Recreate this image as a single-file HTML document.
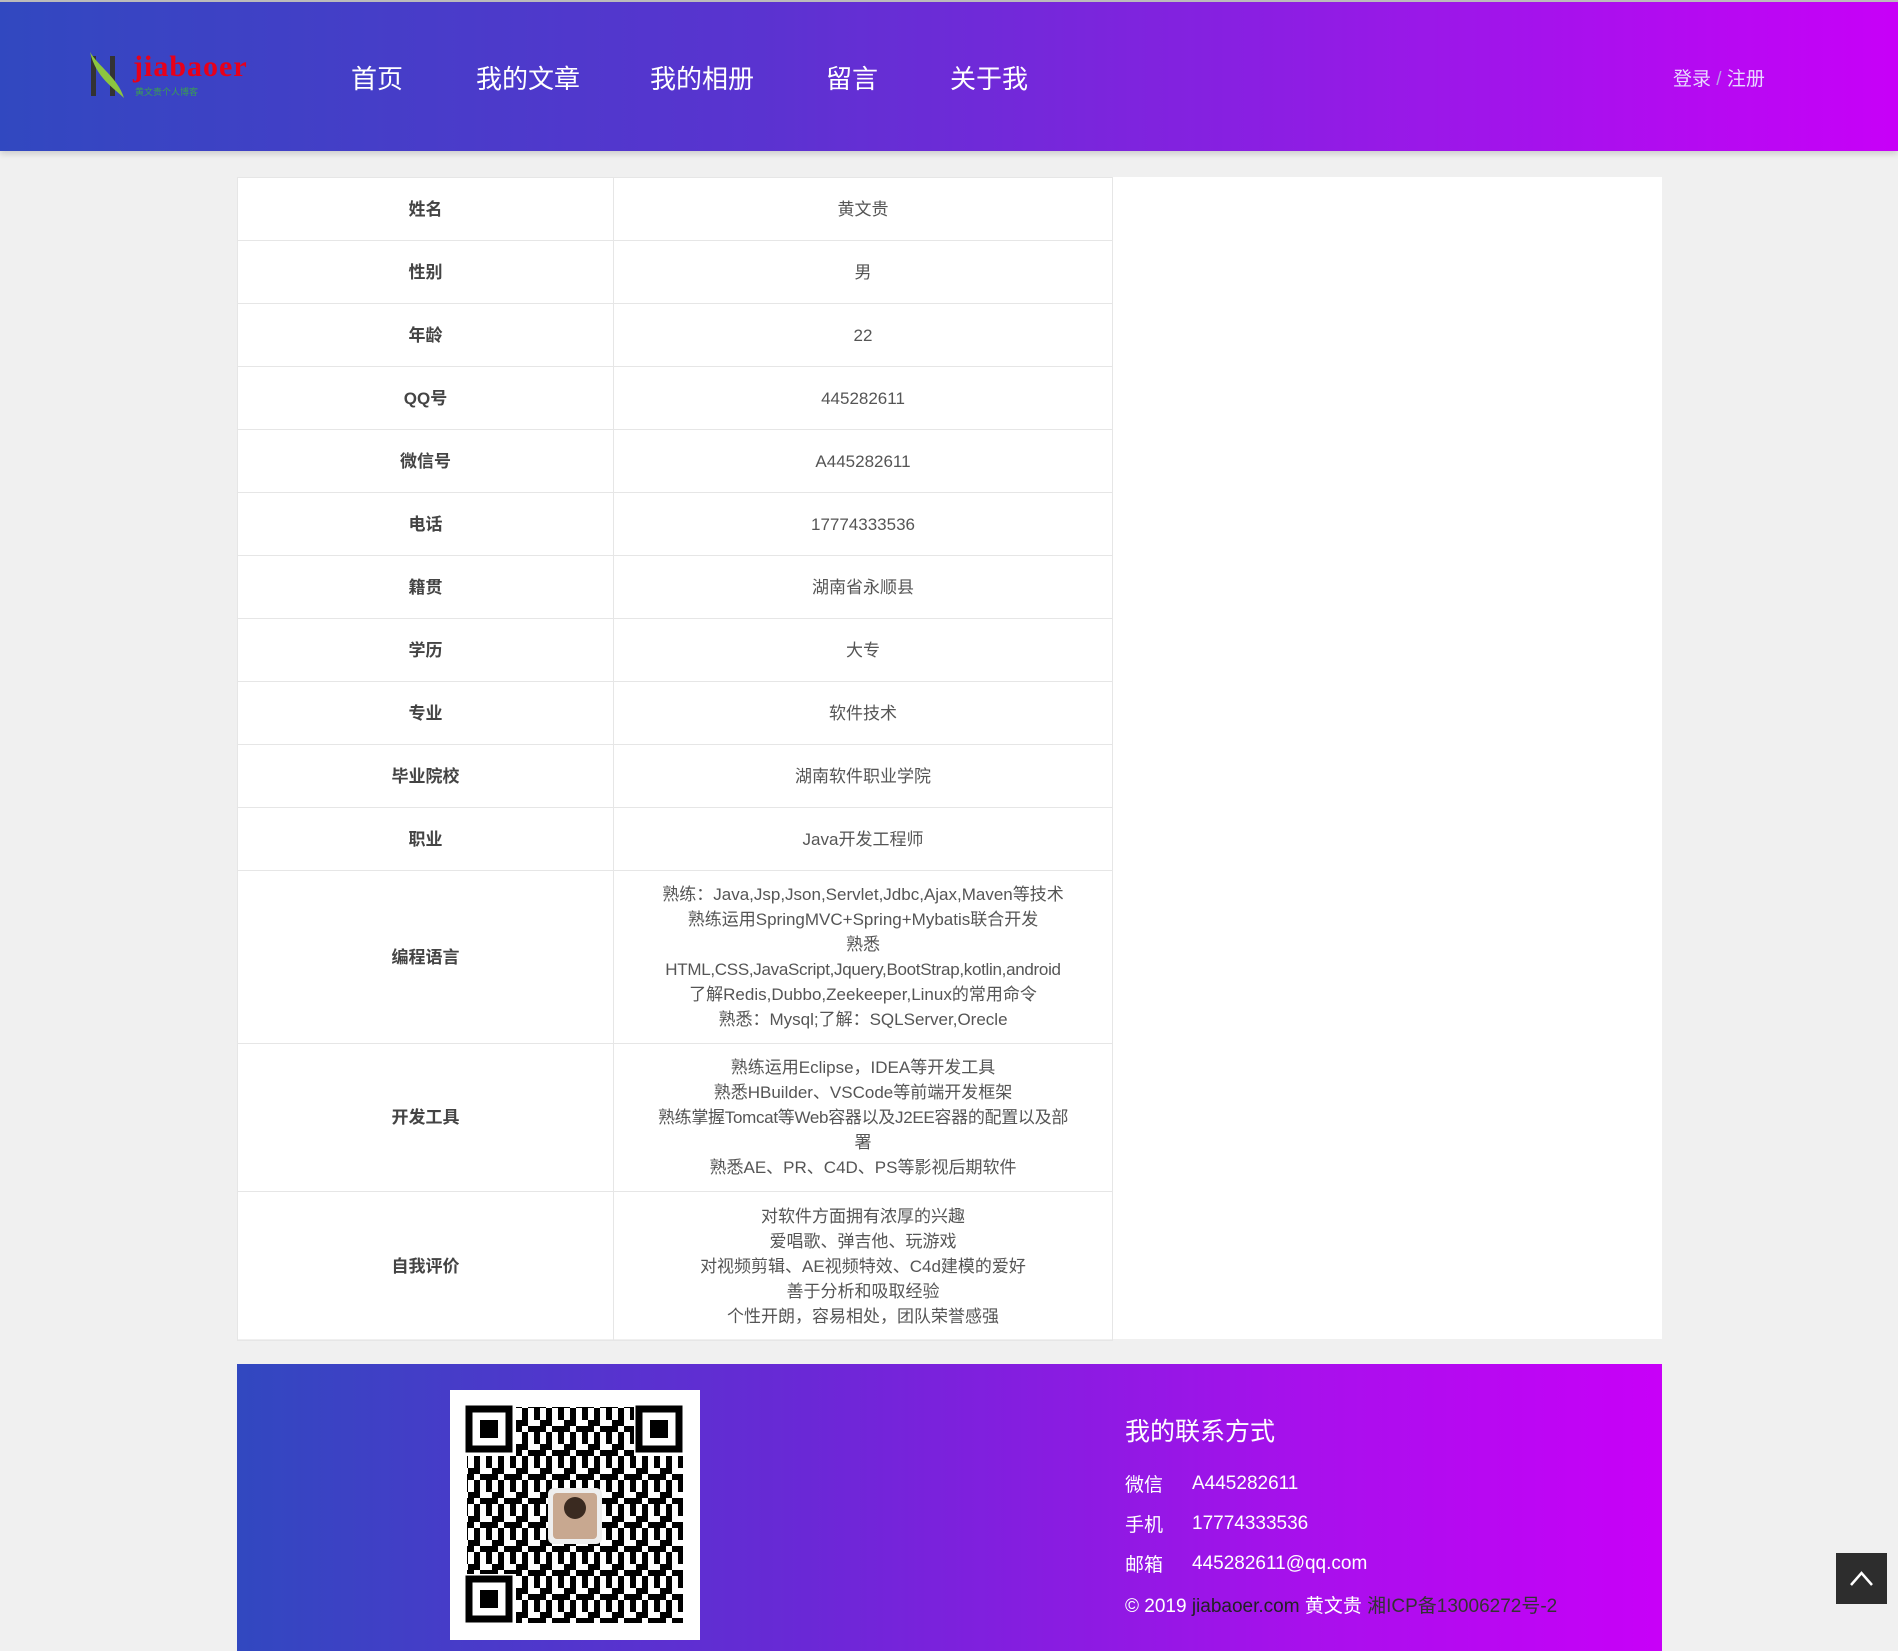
<!DOCTYPE html>
<html><head><meta charset="utf-8">
<style>
*{margin:0;padding:0;box-sizing:border-box}
body{width:1898px;height:1651px;background:#f0f0f0;font-family:"Liberation Sans","Noto Sans CJK SC",sans-serif;position:relative;overflow:hidden}
.hdr{position:absolute;left:0;top:0;width:1898px;height:151px;background:linear-gradient(90deg,#3148c0,#5a33d0 40%,#9a18e8 75%,#c800f8);border-top:2px solid #bbb;box-shadow:0 3px 6px rgba(0,0,0,.15)}
.nav{position:absolute;top:60px;color:#fff;font-size:26px;line-height:34px}
.login{position:absolute;left:1673px;top:62px;color:#e8d8ff;font-size:19px}
.panel{position:absolute;left:237px;top:177px;width:1425px;height:1162px;background:#fff}
table{position:absolute;left:237px;top:177px;width:876px;border-collapse:collapse;font-size:17px;color:#555;text-align:center}
td{border:1px solid #e6e6e6;line-height:25px;white-space:nowrap}
td.l{width:376px;font-weight:bold;color:#444}
tr{height:63px}
.ft{position:absolute;left:237px;top:1364px;width:1425px;height:287px;background:linear-gradient(90deg,#3148c0,#6a28d6 40%,#a810ec 75%,#c800f8)}
.qr{position:absolute;left:213px;top:26px;width:250px;height:250px;background:#fff}
.ct{position:absolute;color:#fff;font-size:19px}
.top{position:absolute;left:1836px;top:1553px;width:51px;height:51px;background:#2d2d2d}
</style></head><body>
<div class="hdr">
<svg style="position:absolute;left:88px;top:46px" width="175" height="54" viewBox="0 0 175 54">
<rect x="3" y="8" width="5" height="40" fill="#333"/><rect x="22" y="8" width="5" height="40" fill="#333"/>
<path d="M2 4 C10 18 30 30 36 50 C26 40 8 30 2 4Z" fill="#8cc63f"/>
<text x="45" y="28" font-family="Liberation Serif,serif" font-weight="bold" font-size="30" fill="#e8001a" letter-spacing="1">jiabaoer</text>
<text x="47" y="47" font-size="9" fill="#3aa050">黄文贵个人博客</text>
</svg>
<div class="nav" style="left:351px">首页</div>
<div class="nav" style="left:476px">我的文章</div>
<div class="nav" style="left:650px">我的相册</div>
<div class="nav" style="left:826px">留言</div>
<div class="nav" style="left:950px">关于我</div>
<div class="login">登录 <span style="color:#b9a0e8">/</span> 注册</div>
</div>
<div class="panel"></div>
<table>
<tr><td class="l">姓名</td><td>黄文贵</td></tr>
<tr><td class="l">性别</td><td>男</td></tr>
<tr><td class="l">年龄</td><td>22</td></tr>
<tr><td class="l">QQ号</td><td>445282611</td></tr>
<tr><td class="l">微信号</td><td>A445282611</td></tr>
<tr><td class="l">电话</td><td>17774333536</td></tr>
<tr><td class="l">籍贯</td><td>湖南省永顺县</td></tr>
<tr><td class="l">学历</td><td>大专</td></tr>
<tr><td class="l">专业</td><td>软件技术</td></tr>
<tr><td class="l">毕业院校</td><td>湖南软件职业学院</td></tr>
<tr><td class="l">职业</td><td>Java开发工程师</td></tr>
<tr style="height:173px"><td class="l">编程语言</td><td>熟练：Java,Jsp,Json,Servlet,Jdbc,Ajax,Maven等技术<br>熟练运用SpringMVC+Spring+Mybatis联合开发<br>熟悉<br><span style="letter-spacing:-0.3px">HTML,CSS,JavaScript,Jquery,BootStrap,kotlin,android</span><br>了解Redis,Dubbo,Zeekeeper,Linux的常用命令<br>熟悉：Mysql;了解：SQLServer,Orecle</td></tr>
<tr style="height:148px"><td class="l">开发工具</td><td>熟练运用Eclipse，IDEA等开发工具<br>熟悉HBuilder、VSCode等前端开发框架<br><span style="letter-spacing:-0.3px">熟练掌握Tomcat等Web容器以及J2EE容器的配置以及部</span><br>署<br>熟悉AE、PR、C4D、PS等影视后期软件</td></tr>
<tr style="height:149px"><td class="l">自我评价</td><td>对软件方面拥有浓厚的兴趣<br>爱唱歌、弹吉他、玩游戏<br>对视频剪辑、AE视频特效、C4d建模的爱好<br>善于分析和吸取经验<br>个性开朗，容易相处，团队荣誉感强</td></tr>
</table>
<div class="ft">
<div class="qr">
<svg width="250" height="250" viewBox="0 0 250 250">
<defs><pattern id="p" width="24" height="24" patternUnits="userSpaceOnUse">
<rect x="0" y="0" width="6" height="12" fill="#000"/><rect x="12" y="0" width="6" height="6" fill="#000"/><rect x="6" y="12" width="12" height="6" fill="#000"/><rect x="18" y="6" width="6" height="12" fill="#000"/><rect x="0" y="18" width="6" height="6" fill="#000"/><rect x="12" y="18" width="6" height="6" fill="#000"/></pattern></defs>
<rect x="17" y="17" width="216" height="216" fill="url(#p)"/>
<g fill="#fff"><rect x="14" y="14" width="52" height="52"/><rect x="184" y="14" width="52" height="52"/><rect x="14" y="184" width="52" height="52"/></g>
<g fill="none" stroke="#000" stroke-width="7"><rect x="19" y="19" width="40" height="40"/><rect x="189" y="19" width="40" height="40"/><rect x="19" y="189" width="40" height="40"/></g>
<g fill="#000"><rect x="30" y="30" width="18" height="18"/><rect x="200" y="30" width="18" height="18"/><rect x="30" y="200" width="18" height="18"/></g>
<rect x="98" y="98" width="54" height="56" rx="6" fill="#eee"/><rect x="103" y="103" width="44" height="46" rx="4" fill="#c8a890"/><circle cx="125" cy="118" r="11" fill="#3a2a20"/>
</svg></div>
<div class="ct" style="left:888px;top:48px;font-size:25px">我的联系方式</div>
<div class="ct" style="left:888px;top:106px">微信</div><div class="ct" style="left:955px;top:109px">A445282611</div>
<div class="ct" style="left:888px;top:146px">手机</div><div class="ct" style="left:955px;top:149px">17774333536</div>
<div class="ct" style="left:888px;top:186px">邮箱</div><div class="ct" style="left:955px;top:189px">445282611@qq.com</div>
<div class="ct" style="left:888px;top:227px">© 2019 <span style="color:#222">jiabaoer.com</span> 黄文贵 <span style="color:#333">湘ICP备13006272号-2</span></div>
</div>
<div class="top"><svg width="51" height="51"><path d="M15 32 L25.5 20 L36 32" fill="none" stroke="#fff" stroke-width="2.5"/></svg></div>
</body></html>
